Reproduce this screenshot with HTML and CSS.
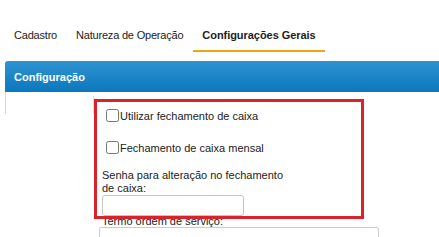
FILE: index.html
```html
<!DOCTYPE html>
<html lang="pt-BR">
<head>
<meta charset="utf-8">
<title>Configurações Gerais</title>
<link rel="stylesheet" href="styles.css">
</head>
<body>
<nav class="tabs">
  <a class="tab">Cadastro</a>
  <a class="tab">Natureza de Operação</a>
  <a class="tab tab-active">Configurações Gerais</a>
</nav>
<section class="panel">
  <header class="panel-head">Configuração</header>
  <div class="panel-body">
    <aside class="sidebar"><div class="sidebar-inner"></div></aside>
    <div class="content">
      <label class="check-row"><input type="checkbox"><span>Utilizar fechamento de caixa</span></label>
      <label class="check-row check-row-2"><input type="checkbox"><span>Fechamento de caixa mensal</span></label>
      <div class="field">
        <label class="field-label">Senha para alteração no fechamento de caixa:</label>
        <input class="text-input" type="password">
      </div>
      <div class="field-wide">
        <label class="field-label-tight">Termo ordem de serviço:</label>
        <textarea class="textarea"></textarea>
      </div>
    </div>
    <div class="highlight"></div>
  </div>
</section>
</body>
</html>
```
FILE: styles.css
```css
html, body {
  margin: 0;
  padding: 0;
  background: #ffffff;
  overflow: hidden;
}
body {
  font-family: "Liberation Sans", Arial, sans-serif;
  font-size: 11px;
  color: #222222;
  width: 439px;
  height: 237px;
}
.tabs {
  display: flex;
  padding: 28px 0 0 4.5px;
  letter-spacing: -0.2px;
}
.tab {
  display: block;
  line-height: 14px;
  padding: 0 9.5px 8px;
  border-bottom: 2px solid transparent;
  color: #222222;
}
.tab-active {
  font-weight: bold;
  letter-spacing: -0.05px;
  border-bottom-color: #f0a511;
}
.panel {
  margin: 9px 0 0 5px;
}
.panel-head {
  height: 31px;
  display: flex;
  align-items: center;
  padding-left: 9px;
  color: #ffffff;
  font-weight: bold;
  border-radius: 3px 0 0 0;
  background: linear-gradient(#2f93d1, #0b77bd);
}
.panel-body {
  position: relative;
  display: flex;
  height: 160px;
}
.sidebar {
  width: 88px;
  height: 22px;
  border-left: 1px solid #d6d6d6;
  flex-shrink: 0;
}
.sidebar-inner {
  margin-top: 4px;
  height: 18px;
  border-right: 1px solid #dddddd;
}
.content {
  padding: 17px 0 0 8px;
  display: flex;
  flex-direction: column;
}
.check-row {
  display: flex;
  align-items: center;
  height: 19px;
}
.check-row input {
  width: 13px;
  height: 13px;
  margin: 0 1px 0 4px;
}
.check-row-2 {
  margin-top: 19px;
}
.field {
  width: 185px;
  margin-top: 15px;
}
.field-label {
  display: block;
  line-height: 13px;
}
.text-input {
  display: block;
  box-sizing: border-box;
  width: 142px;
  height: 21px;
  margin: 0;
  border: 1px solid #c4c4c4;
  border-radius: 3px;
}
.field-wide {
  margin-top: -1px;
}
.field-label-tight {
  display: block;
  line-height: 12px;
}
.textarea {
  display: block;
  box-sizing: border-box;
  width: 280px;
  height: 40px;
  margin: 0 0 0 -3px;
  border: 1px solid #cccccc;
  border-radius: 2px;
  resize: none;
}
.highlight {
  position: absolute;
  left: 89px;
  top: 7px;
  width: 270px;
  height: 120px;
  box-sizing: border-box;
  border: 3px solid #d8232a;
  pointer-events: none;
}
```
